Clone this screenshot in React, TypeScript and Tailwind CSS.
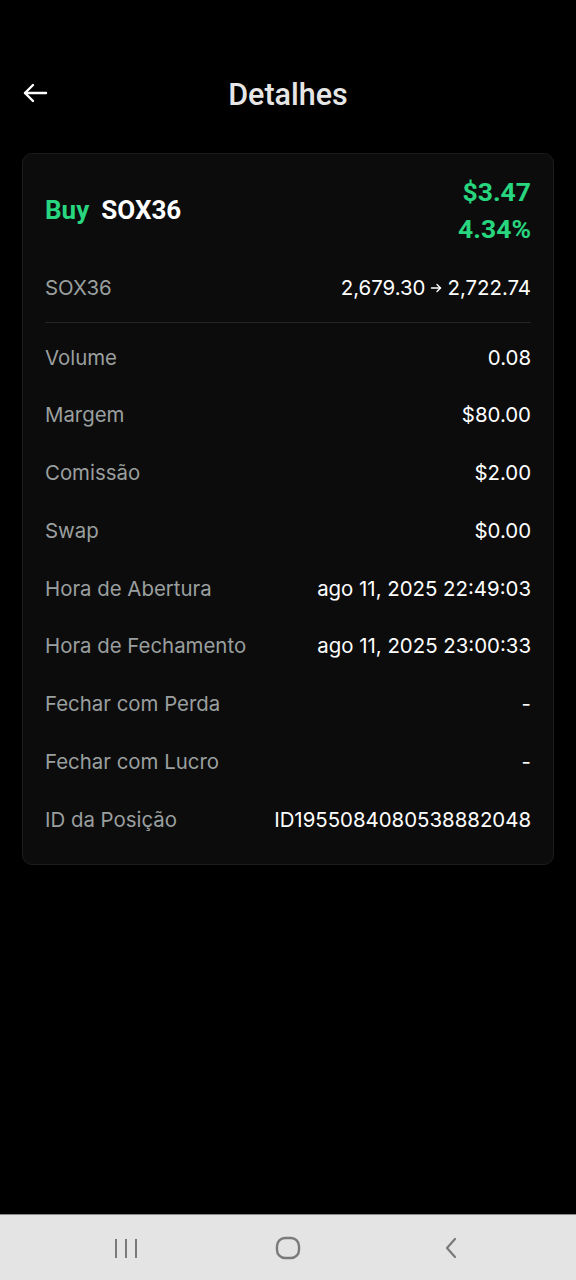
import { ReactNode } from 'react'

const rows: { label: string; value: ReactNode }[] = [
  { label: 'Volume', value: '0.08' },
  { label: 'Margem', value: '$80.00' },
  { label: 'Comissão', value: '$2.00' },
  { label: 'Swap', value: '$0.00' },
  { label: 'Hora de Abertura', value: 'ago 11, 2025 22:49:03' },
  { label: 'Hora de Fechamento', value: 'ago 11, 2025 23:00:33' },
  { label: 'Fechar com Perda', value: '-' },
  { label: 'Fechar com Lucro', value: '-' },
  { label: 'ID da Posição', value: 'ID1955084080538882048' },
]

function Row({ label, value }: { label: string; value: ReactNode }) {
  return (
    <div className="flex h-[57.75px] items-center justify-between">
      <span className="text-[#9a9f9f]">{label}</span>
      <span className="text-white">{value}</span>
    </div>
  )
}

export default function App() {
  return (
    <div className="flex min-h-[1280px] w-[576px] flex-col bg-black">
      <div className="flex-1">
        <header className="relative mt-[64px] flex h-[60px] items-center justify-center">
          <button className="absolute left-[22px] top-[16px] text-white">
            <svg width="26" height="26" viewBox="0 0 26 26" fill="none" stroke="currentColor" strokeWidth="2.4" strokeLinecap="round" strokeLinejoin="round">
              <path d="M24 13H3" />
              <path d="M11 5L3 13l8 8" />
            </svg>
          </button>
          <h1 className="pt-[2px] font-['Roboto',sans-serif] text-[30.5px] font-medium text-[#e6e6e6]">Detalhes</h1>
        </header>

        <div className="mx-[22px] mt-[29px] rounded-[10px] border border-[#1c1c1c] bg-[#0c0c0c] px-[22px] pb-[15px] pt-[19px] font-['Inter',sans-serif] text-[20.4px]">
          <div className="flex items-center justify-between font-['Roboto',sans-serif] font-bold">
            <div className="flex items-center gap-[12px] text-[26px]">
              <span className="text-[#27d67e]">Buy</span>
              <span className="text-white">SOX36</span>
            </div>
            <div className="flex flex-col items-end text-[26.5px] leading-[37px] text-[#27d67e]">
              <span>$3.47</span>
              <span>4.34%</span>
            </div>
          </div>

          <div className="mt-[12px] flex h-[58px] items-center justify-between">
            <span className="text-[#9a9f9f]">SOX36</span>
            <span className="flex items-center gap-[5px] text-white">
              2,679.30
              <svg width="12" height="12" viewBox="0 0 12 12" fill="none" stroke="currentColor" strokeWidth="1.4" strokeLinecap="round" strokeLinejoin="round">
                <path d="M1.5 6h9" />
                <path d="M7 2.5L10.5 6 7 9.5" />
              </svg>
              2,722.74
            </span>
          </div>
          <div className="mb-[6px] mt-[5px] h-px bg-[#242424]" />

          {rows.map((r) => (
            <Row key={r.label} label={r.label} value={r.value} />
          ))}
        </div>
      </div>

      <nav className="grid h-[66px] grid-cols-3 items-center border-t border-[#8a8a8a] bg-[#e4e4e4] px-[45px]">
        <div className="flex justify-center">
          <svg width="28" height="22" viewBox="0 0 28 22" fill="none" stroke="#7a7a7a" strokeWidth="2">
            <path d="M4 2v19M14 2v19M24 2v19" />
          </svg>
        </div>
        <div className="flex justify-center">
          <svg width="26" height="24" viewBox="0 0 26 24" fill="none" stroke="#7a7a7a" strokeWidth="2.4">
            <rect x="2" y="2" width="22" height="20" rx="8" />
          </svg>
        </div>
        <div className="flex justify-center">
          <svg width="18" height="24" viewBox="0 0 18 24" fill="none" stroke="#7a7a7a" strokeWidth="2.2" strokeLinecap="round" strokeLinejoin="round">
            <path d="M14 3L6 12l8 9" />
          </svg>
        </div>
      </nav>
    </div>
  )
}
